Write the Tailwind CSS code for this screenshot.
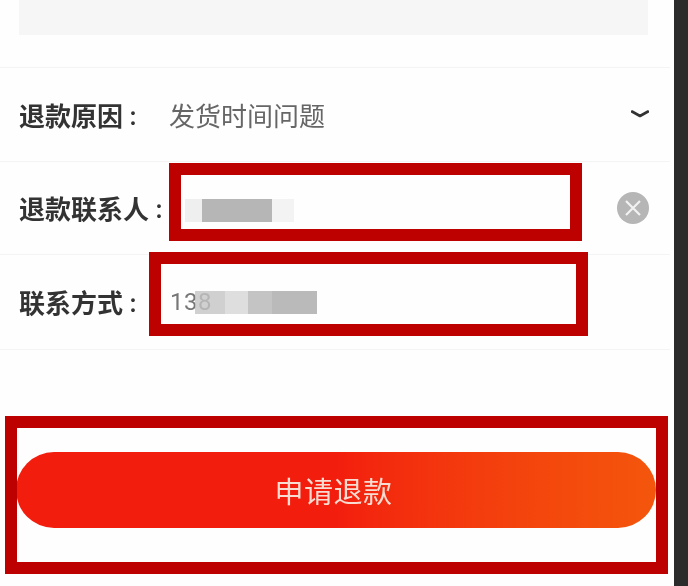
<!DOCTYPE html>
<html lang="zh-CN">
  <head>
    <meta charset="UTF-8" />
    <meta name="viewport" content="width=device-width, initial-scale=1.0" />
    <script src="https://cdn.jsdelivr.net/npm/@tailwindcss/browser@4"></script>
    <title>申请退款</title>
  </head>
  <body class="bg-[#2b2b2b]">
    <div class="relative flex w-[688px] h-[586px] overflow-hidden font-['Noto_Sans_CJK_SC','Liberation_Sans',sans-serif]">
      <!-- Page -->
      <div class="w-[674px] h-full bg-[#fefefe]">
        <div class="mx-[19px] w-[629px] h-[35px] bg-[#f6f6f6]"></div>

        <!-- Form rows -->
        <div class="mt-[32px] mr-[4px] border-t border-[#f4f4f4]">
          <div class="flex items-center h-[94px] pl-[19px] pr-[21px] border-b border-[#f4f4f4]">
            <span class="w-[150px] text-[26px] leading-none font-bold text-[#333] blur-[0.5px] whitespace-nowrap">退款原因<span lang="zh-TW" class="text-[20px] font-['Noto_Sans_CJK_TC']">：</span></span>
            <span class="text-[26px] leading-none text-[#666] blur-[0.5px]">发货时间问题</span>
            <svg class="ml-auto mt-[-1px] blur-[0.3px]" width="18" height="10" viewBox="0 0 18 10" fill="none">
              <path d="M1 2.5 L9 7 L17 2.5" stroke="#333" stroke-width="2.6" stroke-linecap="round" stroke-linejoin="round" />
            </svg>
          </div>
          <div class="flex items-center h-[93px] pl-[19px] pr-[21px] border-b border-[#f4f4f4]">
            <span class="w-[166px] text-[26px] leading-none font-bold text-[#333] blur-[0.5px] whitespace-nowrap">退款联系人<span lang="zh-TW" class="text-[20px] font-['Noto_Sans_CJK_TC']">：</span></span>
            <div class="flex h-[23px] mt-[4px] blur-[0.4px]">
              <div class="w-[17px] bg-[#efefef]"></div>
              <div class="w-[70px] bg-[#b6b6b6]"></div>
              <div class="w-[22px] bg-[#f3f3f3]"></div>
            </div>
            <svg class="ml-auto blur-[0.3px]" width="32" height="32" viewBox="0 0 32 32" fill="none">
              <circle cx="16" cy="16" r="16" fill="#b6b6b6" />
              <path d="M9 9 L23 23 M23 9 L9 23" stroke="#f2f2f2" stroke-width="2.2" />
            </svg>
          </div>
          <div class="flex items-center h-[95px] pl-[19px] border-b border-[#f4f4f4]">
            <span class="w-[151px] text-[26px] leading-none font-bold text-[#333] blur-[0.5px] whitespace-nowrap">联系方式<span lang="zh-TW" class="text-[20px] font-['Noto_Sans_CJK_TC']">：</span></span>
            <span class="w-[25px] text-[24px] leading-none tracking-[0.5px] text-[#777] font-['Roboto',sans-serif] blur-[0.4px] whitespace-nowrap">138</span>
            <div class="flex h-[23px] mt-[1px] blur-[0.4px]">
              <div class="w-[30px] bg-[#c4c4c4]/80"></div>
              <div class="w-[23px] bg-[#dedede]"></div>
              <div class="w-[24px] bg-[#c4c4c4]"></div>
              <div class="w-[45px] bg-[#bababa]"></div>
            </div>
          </div>
        </div>

        <!-- Submit -->
        <button class="block mt-[102px] ml-[16px] w-[640px] h-[76px] pr-[5px] rounded-full bg-gradient-to-r from-[#f31d0e] from-50% to-[#f4560c] text-[29px] leading-none tracking-[0.5px] text-[#f8dcd2]">
          <span class="blur-[0.4px] block">申请退款</span>
        </button>
      </div>

      <!-- Red annotation boxes -->
      <div class="absolute left-[169px] top-[163px] w-[413px] h-[78px] border-[12px] border-[#bd0000]"></div>
      <div class="absolute left-[149px] top-[252px] w-[439px] h-[84px] border-[12px] border-[#bd0000]"></div>
      <div class="absolute left-[5px] top-[416px] w-[663px] h-[158px] border-[12px] border-[#bd0000]"></div>
    </div>
  </body>
</html>
